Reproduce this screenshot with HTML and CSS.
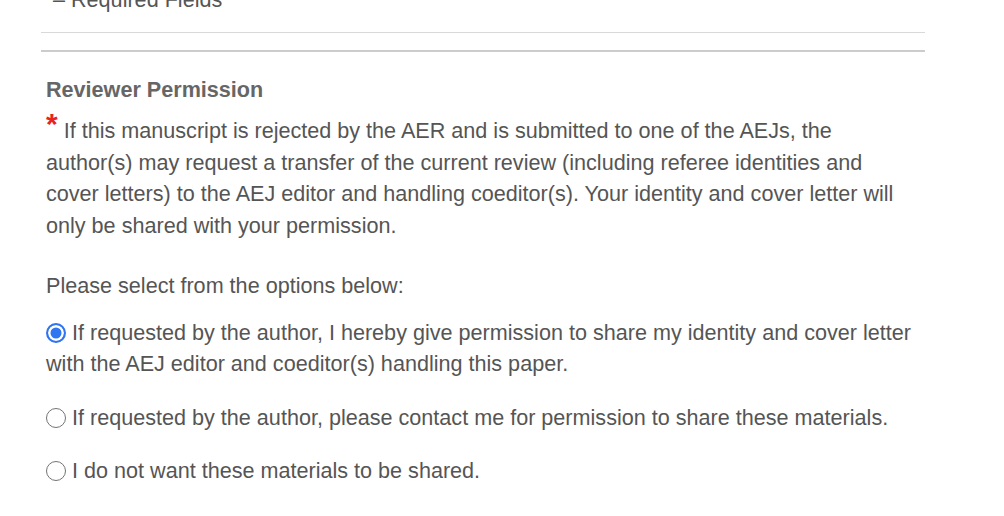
FILE: index.html
```html
<!DOCTYPE html>
<html>
<head>
<meta charset="utf-8">
<link rel="stylesheet" href="styles.css">
</head>
<body>
<div class="page">
  <div class="required">– Required Fields</div>
  <hr class="rule rule-thin">
  <hr class="rule rule-thick">
  <section class="section">
    <h2 class="heading">Reviewer Permission</h2>
    <p class="intro"><span class="star">*</span> If this manuscript is rejected by the AER and is submitted to one of the AEJs, the author(s) may request a transfer of the current review (including referee identities and cover letters) to the AEJ editor and handling coeditor(s). Your identity and cover letter will only be shared with your permission.</p>
    <p class="prompt">Please select from the options below:</p>
    <label class="option"><input type="radio" name="perm" checked> If requested by the author, I hereby give permission to share my identity and cover letter with the AEJ editor and coeditor(s) handling this paper.</label>
    <label class="option"><input type="radio" name="perm"> If requested by the author, please contact me for permission to share these materials.</label>
    <label class="option"><input type="radio" name="perm"> I do not want these materials to be shared.</label>
  </section>
</div>
</body>
</html>
```

FILE: styles.css
```css
html, body {
  margin: 0;
  padding: 0;
  background: #fff;
}
body {
  font-family: "Liberation Sans", Arial, sans-serif;
  font-size: 21.6px;
  color: #555;
}
.page {
  width: 884px;
  padding-left: 41px;
}
.required {
  margin-top: -13.5px;
  padding-left: 12px;
  line-height: 26px;
  height: 26px;
}
.rule {
  border: 0;
  margin: 0;
}
.rule-thin {
  margin-top: 19.5px;
  border-top: 1px solid #d9d9d9;
}
.rule-thick {
  margin-top: 17px;
  border-top: 2px solid #cccccc;
}
.section {
  padding: 0 5px;
}
.heading {
  margin: 24.5px 0 0;
  font-size: 21.6px;
  font-weight: bold;
  color: #666;
  line-height: 26px;
}
.intro {
  margin: 12.75px 0 0;
  line-height: 31.5px;
}
.star {
  color: #e8231e;
  font-size: 30px;
  font-weight: bold;
  vertical-align: 4px;
  line-height: 0;
}
.prompt {
  margin: 28.5px 0 0;
  line-height: 31.5px;
}
.option {
  display: block;
  margin-top: 15.5px;
  line-height: 31.5px;
}
.option + .option {
  margin-top: 22px;
}
.option input {
  -webkit-appearance: none;
  appearance: none;
  width: 20px;
  height: 20px;
  margin: 0;
  border: 1.5px solid #737373;
  border-radius: 50%;
  background: #fff;
  vertical-align: -3px;
  box-sizing: border-box;
}
.option input:checked {
  border: 2px solid #2f74f1;
  box-shadow: inset 0 0 0 2.5px #fff;
  background: #2f74f1;
}
```
